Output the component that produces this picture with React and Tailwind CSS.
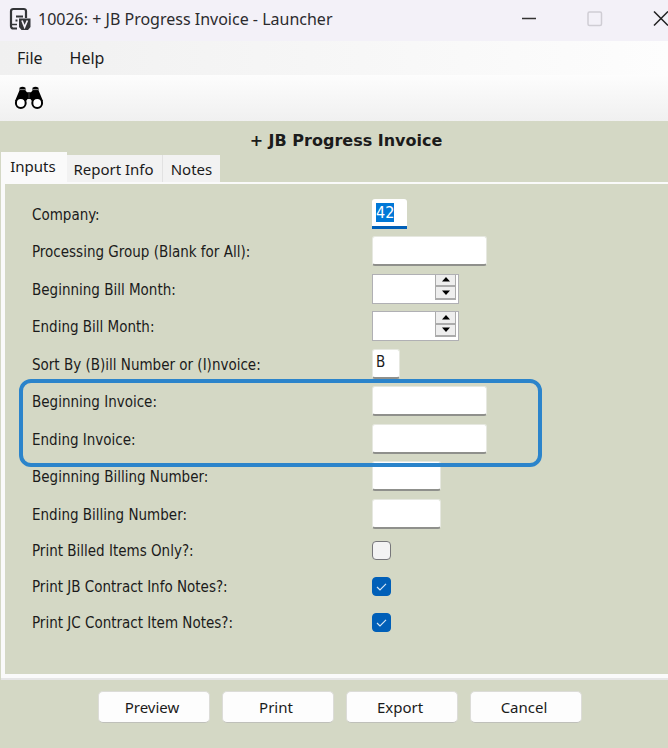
import { useEffect, useRef } from "react";

const ROW = "flex items-center";
const LABEL = "w-[340px] shrink-0 pt-[2px]";
const FIELD =
  "h-[30px] rounded-[3px] border border-b-2 border-[#e6e8e0] border-b-[#8f908c] bg-white px-[3px] pb-[2px] text-[15px] outline-none";

function TextRow({ id, label, width, value, height }) {
  return (
    <div className={`${ROW} ${height}`}>
      <label htmlFor={id} className={LABEL}>{label}</label>
      <input id={id} type="text" defaultValue={value} className={`${FIELD} ${width}`} />
    </div>
  );
}

function MonthRow({ id, label, height }) {
  return (
    <div className={`${ROW} ${height}`}>
      <label htmlFor={id} className={LABEL}>{label}</label>
      <div className="flex h-[30px] w-[87px] border border-[#b0b0b4] bg-white pr-[2px] pb-[3px]">
        <input id={id} type="text" className="min-w-0 flex-1 bg-transparent px-1 outline-none" />
        <div className="flex w-[21px] flex-col border-x border-b-2 border-[#ababab] bg-[#eeeeee]">
          <button type="button" aria-label={`${label} up`} className="flex flex-1 items-center justify-center">
            <svg viewBox="0 0 8 5" className="h-[5px] w-2"><path d="M4 0 8 4.500H0z" /></svg>
          </button>
          <button type="button" aria-label={`${label} down`} className="flex flex-1 items-center justify-center border-t-2 border-[#ababab]">
            <svg viewBox="0 0 8 5" className="h-[5px] w-2"><path d="M0 .5h8L4 5z" /></svg>
          </button>
        </div>
      </div>
    </div>
  );
}

function CheckRow({ id, label, checked }) {
  return (
    <div className={`${ROW} h-9`}>
      <label htmlFor={id} className={LABEL}>{label}</label>
      <div className="relative flex">
        <input
          id={id}
          type="checkbox"
          defaultChecked={checked}
          className="peer size-[19px] appearance-none rounded-[4px] border border-[#77777a] bg-[#f3f3f3] checked:border-[#005fb8] checked:bg-[#005fb8]"
        />
        <svg
          viewBox="0 0 19 19"
          fill="none"
          stroke="#d5e6f5"
          strokeWidth="1.2"
          className="pointer-events-none absolute inset-0 hidden size-[19px] peer-checked:block"
        >
          <path d="M5 10l3 3 6-6.2" />
        </svg>
      </div>
    </div>
  );
}

function AppIcon() {
  return (
    <svg viewBox="0 0 22 24" className="h-6 w-[22px]" fill="none" stroke="#333538" strokeWidth="2.200">
      <path d="M8 21.500H4.200a2.200 2.200 0 0 1-2.200-2.200V4.200A2.200 2.200 0 0 1 4.200 2h10.600A2.200 2.200 0 0 1 17 4.200V11" />
      <path d="M7 9.500h7" strokeWidth="2" />
      <path d="M6.500 13.500h2" strokeWidth="2" />
      <path d="M2 17.500h6" strokeWidth="1.500" />
      <path d="M10 11.500h11.500v8.500l-2.500 3h-6.500l-2.500-3z" fill="#333538" stroke="none" />
      <path d="M13 13.500l2.600 6.500 2.800-6.500" stroke="#f3f1f8" strokeWidth="1.700" />
    </svg>
  );
}

function Binoculars() {
  return (
    <svg viewBox="0 0 30 24" className="h-6 w-[30px]">
      <path d="M5.500 1.800Q8.500-.2 11.500 1.800V4.500L13 6.200h4L18.500 4.500V1.800Q21.500-.2 24.500 1.800V4.200L29 15l-5 4-6.500-4.500-1-1.500h-3l-1 1.500L6 19l-5-4L5.500 4.200z" />
      <path d="M6 3.600h5M19 3.600h5" stroke="#aaa" strokeWidth=".8" />
      <path d="M15 6.500v6" stroke="#555" strokeWidth=".8" />
      <circle cx="6.800" cy="17" r="4.900" fill="#fff" stroke="#000" strokeWidth="2" />
      <circle cx="23.200" cy="17" r="4.900" fill="#fff" stroke="#000" strokeWidth="2" />
    </svg>
  );
}

export default function App() {
  const company = useRef(null);
  useEffect(() => {
    company.current.focus();
    company.current.select();
  }, []);

  return (
    <div className="flex min-h-screen flex-col overflow-hidden bg-[#d4d8c5] font-['Noto_Sans',sans-serif] text-[15px] leading-5 text-[#1b1b1b]">
      <header className="flex h-[41px] items-center bg-[#f3f1f8] pb-1 pl-[9px] text-base">
        <AppIcon />
        <h1 className="ml-[7px] flex-1 whitespace-nowrap text-[#2b2b2e]">10026: + JB Progress Invoice - Launcher</h1>
        <button type="button" aria-label="Minimize" className="mr-[50px]">
          <svg viewBox="0 0 16 16" className="size-4" stroke="#333" strokeWidth="1.500"><path d="M1 7.500h14" /></svg>
        </button>
        <button type="button" aria-label="Maximize" disabled className="mr-[50px]">
          <svg viewBox="0 0 16 16" className="size-4" fill="none" stroke="#cfcdd4" strokeWidth="1.500"><rect x="1" y="1" width="13.500" height="13.500" rx="1.500" /></svg>
        </button>
        <button type="button" aria-label="Close" className="-mr-[1px]">
          <svg viewBox="0 0 16 16" className="size-4" fill="none" stroke="#222" strokeWidth="1.500"><path d="M1 .5l14 14M15 .5l-14 14" /></svg>
        </button>
      </header>

      <nav className="flex h-[34px] items-center gap-[27px] bg-linear-to-r from-[#f0f0f0] to-[#fdfdfd] px-[17px] text-base">
        <button type="button">File</button>
        <button type="button">Help</button>
      </nav>

      <div className="flex h-[46px] items-center bg-linear-to-b from-[#fdfdfd] to-[#f0f0f0] pl-[14px]">
        <button type="button" aria-label="Find"><Binoculars /></button>
      </div>

      <main>
        <h2 className="h-[31px] pt-[10px] pl-6 text-center font-['DejaVu_Sans',sans-serif] text-base leading-5 font-bold">+ JB Progress Invoice</h2>

        <div role="tablist" className="flex items-end pl-[1px]">
          <button type="button" role="tab" aria-selected="true" className="h-[30px] w-[66px] bg-[#fafafa] pr-[2px] pb-[2px]">Inputs</button>
          <button type="button" role="tab" aria-selected="false" className="h-[27px] w-[96px] border-r border-[#e2e2e2] bg-[#f2f2f2] pr-[2px]">Report Info</button>
          <button type="button" role="tab" aria-selected="false" className="h-[27px] w-[57px] bg-[#f2f2f2]">Notes</button>
        </div>

        <form className="ml-[1px] border-t-2 border-b-4 border-l-4 border-[#fafafa] pt-[11px] pb-[34px] pl-[27px] font-['DejaVu_Sans_Condensed','DejaVu_Sans',sans-serif] shadow-[0_2px_0_#e6e6e6]">
          <div className={`${ROW} h-[37px]`}>
            <label htmlFor="company" className={LABEL}>Company:</label>
            <input
              id="company"
              ref={company}
              type="text"
              defaultValue="42"
              className="h-[30px] w-[35px] rounded-t-[3px] border-b-[3px] border-[#005fb8] bg-white px-1 text-base outline-none selection:bg-[#0078d7] selection:text-white"
            />
          </div>
          <TextRow id="group" label="Processing Group (Blank for All):" width="w-[115px]" height="h-[38px]" />
          <MonthRow id="begin-month" label="Beginning Bill Month:" height="h-[37px]" />
          <MonthRow id="end-month" label="Ending Bill Month:" height="h-[38px]" />
          <TextRow id="sort" label="Sort By (B)ill Number or (I)nvoice:" width="w-[28px]" height="h-[37px]" value="B" />
          <div className="relative">
            <TextRow id="begin-invoice" label="Beginning Invoice:" width="w-[115px]" height="h-[38px]" />
            <TextRow id="end-invoice" label="Ending Invoice:" width="w-[115px]" height="h-[37px]" />
            <div className="pointer-events-none absolute -top-[3px] -bottom-[10px] -left-[13px] z-10 w-[523px] rounded-xl border-4 border-[#2b84cb]" />
          </div>
          <TextRow id="begin-billing" label="Beginning Billing Number:" width="w-[69px]" height="h-[38px]" />
          <TextRow id="end-billing" label="Ending Billing Number:" width="w-[69px]" height="h-[37px]" />
          <CheckRow id="billed" label="Print Billed Items Only?:" />
          <CheckRow id="contract" label="Print JB Contract Info Notes?:" checked />
          <CheckRow id="item" label="Print JC Contract Item Notes?:" checked />
        </form>

        <div className="flex justify-center gap-3 pt-[13px] pl-3">
          {["Preview", "Print", "Export", "Cancel"].map((name) => (
            <button
              key={name}
              type="button"
              className="h-8 w-28 rounded-[5px] border border-[#dcdcd8] border-b-[#bfc0ba] bg-[#fdfdfd] pr-1"
            >
              {name}
            </button>
          ))}
        </div>
      </main>
    </div>
  );
}
